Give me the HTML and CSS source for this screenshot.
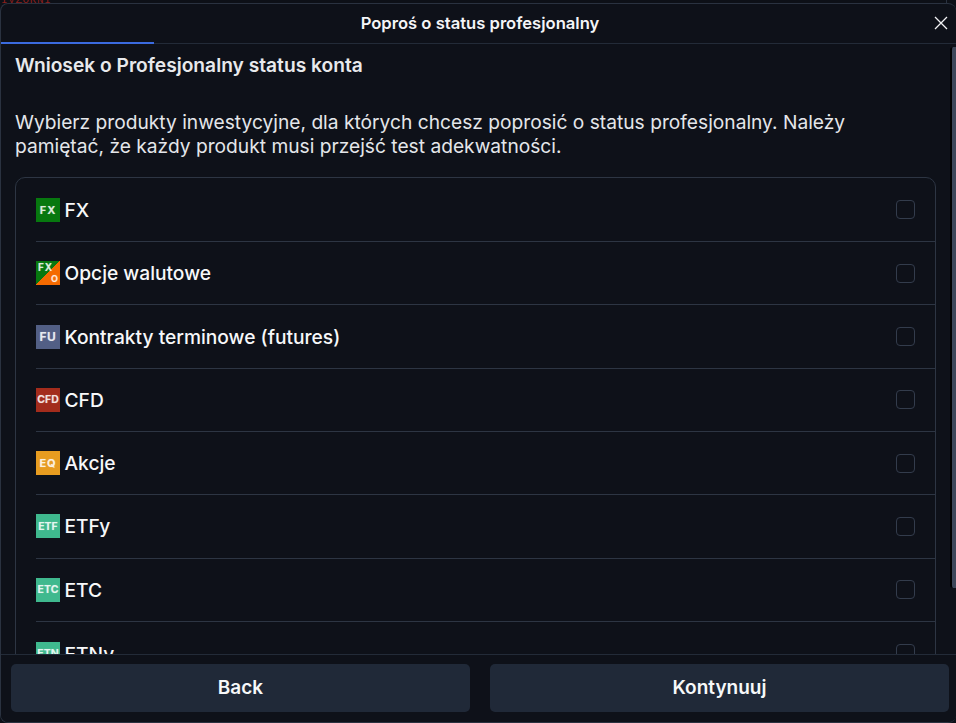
FILE: index.html
```html
<!DOCTYPE html>
<html lang="pl">
<head>
<meta charset="utf-8">
<title>Poproś o status profesjonalny</title>
<link rel="stylesheet" href="styles.css">
</head>
<body>
<div class="backdrop"><span class="peek">IVZORNI</span><span class="peek-line"></span></div>
<div class="modal">
  <header class="modal-head">
    <h1 class="modal-title">Poproś o status profesjonalny</h1>
    <button class="close" aria-label="Zamknij">
      <svg width="14" height="14" viewBox="0 0 14 14"><path d="M1 1 L13 13 M13 1 L1 13" stroke="#f2f3f5" stroke-width="1.3" fill="none"/></svg>
    </button>
    <span class="progress"></span>
  </header>
  <div class="modal-mid">
    <main class="modal-body">
      <h2 class="lead">Wniosek o Profesjonalny status konta</h2>
      <p class="intro">Wybierz produkty inwestycyjne, dla których chcesz poprosić o status profesjonalny. Należy pamiętać, że każdy produkt musi przejść test adekwatności.</p>
      <ul class="products">
        <li class="row"><span class="badge fx">FX</span><span class="name">FX</span><span class="check"></span></li>
        <li class="row"><span class="badge fxo"><span class="fxo-a">FX</span><span class="fxo-b">O</span></span><span class="name">Opcje walutowe</span><span class="check"></span></li>
        <li class="row"><span class="badge fu">FU</span><span class="name">Kontrakty terminowe (futures)</span><span class="check"></span></li>
        <li class="row"><span class="badge cfd">CFD</span><span class="name">CFD</span><span class="check"></span></li>
        <li class="row"><span class="badge eq">EQ</span><span class="name">Akcje</span><span class="check"></span></li>
        <li class="row"><span class="badge etf">ETF</span><span class="name">ETFy</span><span class="check"></span></li>
        <li class="row"><span class="badge etf">ETC</span><span class="name">ETC</span><span class="check"></span></li>
        <li class="row"><span class="badge etf">ETN</span><span class="name">ETNy</span><span class="check"></span></li>
      </ul>
    </main>
    <span class="thumb"></span>
  </div>
  <footer class="modal-foot">
    <button class="btn">Back</button>
    <button class="btn">Kontynuuj</button>
  </footer>
</div>
</body>
</html>
```
FILE: styles.css
```css
* { box-sizing: border-box; }
html, body { margin: 0; height: 100%; overflow: hidden; }
body {
  background: #0d1017;
  font-family: Inter, "Liberation Sans", sans-serif;
  color: #f2f3f5;
  display: flex;
  flex-direction: column;
}
.backdrop {
  height: 3px;
  overflow: hidden;
  flex: none;
  display: flex;
  justify-content: space-between;
  padding-right: 9px;
}
.peek {
  display: block;
  margin: -6px 0 0 1px;
  font: 11px/12px "Liberation Mono", monospace;
  letter-spacing: 0.6px;
  color: #8a1f1c;
}
.peek-line { width: 1px; background: #2a3240; }
.modal {
  flex: 1;
  min-height: 0;
  display: flex;
  flex-direction: column;
  background: #0e1119;
  border: 1px solid #2a3240;
  border-right: 0;
  border-radius: 8px;
  overflow: hidden;
}
.modal-head {
  flex: none;
  height: 40px;
  position: relative;
  display: flex;
  align-items: center;
  justify-content: center;
  padding: 0 0 2px 3px;
  border-bottom: 1px solid #232b38;
}
.modal-title { margin: 0; font-size: 16.6px; font-weight: 600; line-height: 20px; color: #f4f5f7; }
.close {
  position: absolute;
  right: 8px;
  top: 12px;
  padding: 0;
  width: 14px;
  height: 14px;
  background: none;
  border: 0;
  line-height: 0;
}
.progress {
  position: absolute;
  left: 0;
  bottom: -1px;
  width: 153px;
  height: 2px;
  background: #3b6be0;
}
.modal-mid { flex: 1; min-height: 0; position: relative; }
.modal-body {
  height: 100%;
  overflow: hidden;
  padding: 9px 20px 46px 14px;
}
.thumb {
  position: absolute;
  right: 0;
  top: 3px;
  width: 6px;
  height: 541px;
  background: #3d4759;
  border-left: 2px solid #000;
  border-radius: 3px 0 0 3px;
}
.lead { margin: 0; font-size: 19.2px; line-height: 24px; font-weight: 600; color: #e8e9ec; }
.intro { margin: 33px 0 0; font-size: 19.2px; line-height: 24px; color: #e4e6ea; }
.products {
  list-style: none;
  margin: 19px 0 0;
  padding: 0.7px 0 0 20px;
  border: 1px solid #2d3543;
  border-radius: 10px;
}
.row {
  height: 63.33px;
  display: flex;
  align-items: center;
  border-bottom: 1px solid #2d3543;
  padding-right: 20px;
}
.row:last-child { border-bottom: 0; }
.badge {
  flex: none;
  position: relative;
  width: 24px;
  height: 24px;
  display: flex;
  align-items: center;
  justify-content: center;
  font-size: 11px;
  font-weight: 700;
  letter-spacing: 1px;
  color: rgba(255,255,255,.78);
  text-shadow: 0 0 1px rgba(255,255,255,.45);
  overflow: hidden;
}
.fx { background: #07780f; }
.fxo { background: linear-gradient(135deg, #07780f 50%, #f56a00 50%); }
.fu { background: #525f85; font-size: 12px; letter-spacing: .5px; }
.cfd { background: #a32c1c; font-size: 10.5px; letter-spacing: 0; }
.eq { background: #e79c20; }
.etf { background: #3fb98e; font-size: 10.5px; letter-spacing: 0; }
.fxo-a { position: absolute; left: 2px; top: 1px; font-size: 10px; line-height: 11px; }
.fxo-b { position: absolute; right: 2px; bottom: 1px; font-size: 9px; line-height: 10px; letter-spacing: 0; }
.name { flex: 1; margin-left: 4.5px; font-size: 19.2px; line-height: 24px; font-weight: 500; color: #f7f8f9; }
.check {
  flex: none;
  width: 19px;
  height: 19px;
  border: 1px solid #333c4c;
  border-radius: 4px;
}
.modal-foot {
  flex: none;
  height: 68px;
  display: flex;
  gap: 20px;
  padding: 9px 7px 10px 10px;
  background: #0e1119;
  border-top: 1px solid #232b38;
}
.btn {
  flex: 1;
  border: 0;
  border-radius: 5px;
  padding: 0 0 2px;
  background: #202938;
  color: #f7f8f9;
  font-family: inherit;
  font-size: 19px;
  font-weight: 600;
}
```
